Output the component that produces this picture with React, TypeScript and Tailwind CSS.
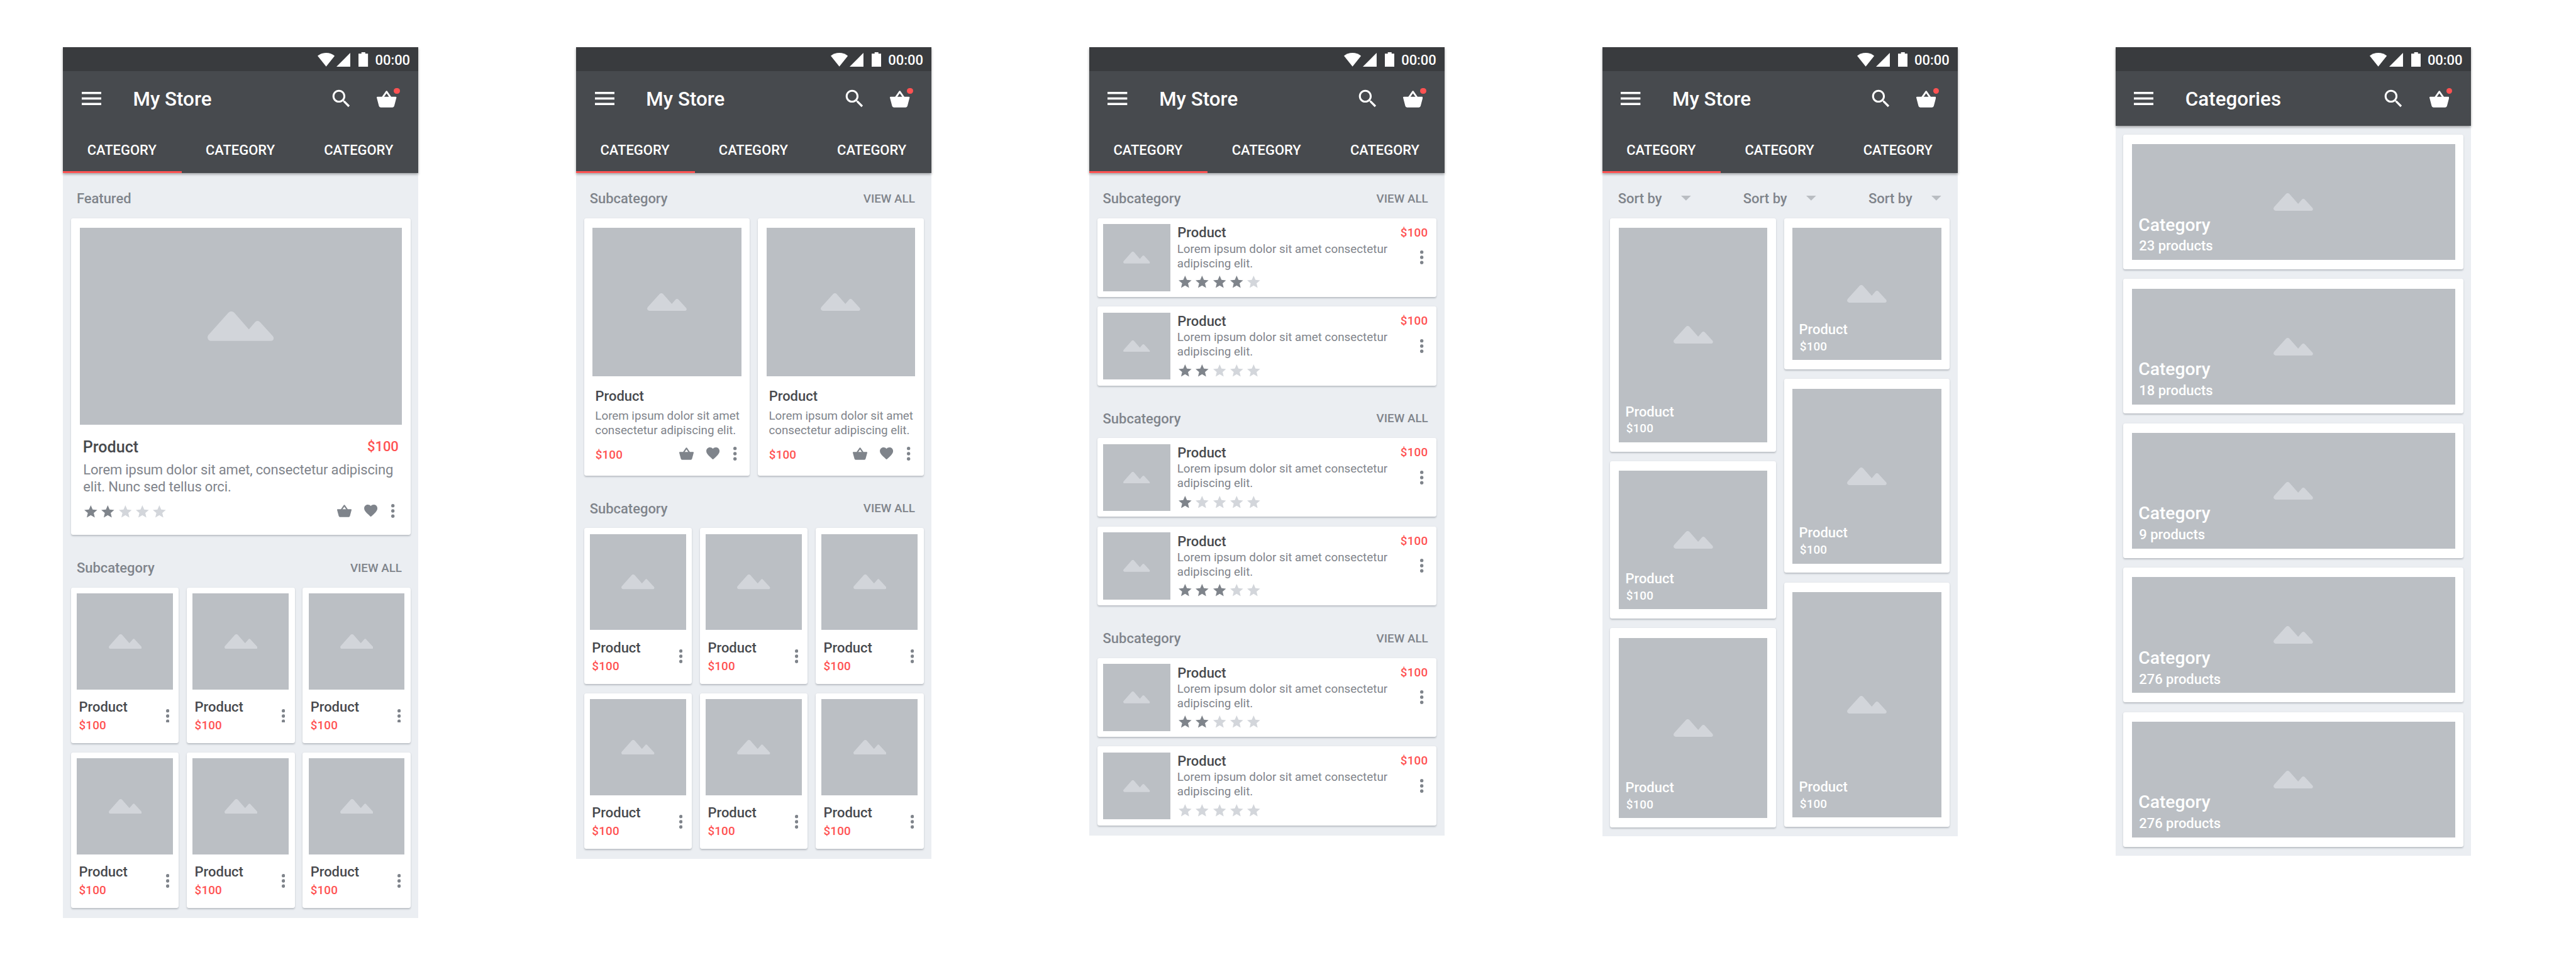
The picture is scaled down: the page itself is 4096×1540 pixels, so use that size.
import React from "react";

/* ---------- icons ---------- */

function WifiIcon() {
  return (
    <svg viewBox="0 0 17.33 13.8" className="h-[13.8px] w-[17.33px] fill-white">
      <path d="M8.67 13.8 0 3.1C2.2 1.2 5.3 0 8.67 0s6.46 1.2 8.66 3.1z" />
    </svg>
  );
}

function SignalIcon() {
  return (
    <svg viewBox="0 0 14 14" className="ml-[2px] size-[14px] fill-white">
      <path d="M0 14 14 0v14z" />
    </svg>
  );
}

function BatteryIcon() {
  return (
    <svg viewBox="0 0 9.67 14.67" className="ml-[8.33px] h-[14.67px] w-[9.67px] fill-white">
      <path d="M3 0h3.85v1.4h2.82v13.27H0V1.4h3z" />
    </svg>
  );
}

function MenuIcon() {
  return (
    <svg viewBox="0 0 20 13.33" className="h-[13.33px] w-[20px] fill-white">
      <path d="M0 0h20v2.2H0zM0 5.56h20v2.2H0zM0 11.13h20v2.2H0z" />
    </svg>
  );
}

function SearchIcon() {
  return (
    <svg viewBox="0 0 24 24" className="size-6 fill-white">
      <path d="M15.5 14h-.79l-.28-.27C15.41 12.59 16 11.11 16 9.5 16 5.91 13.09 3 9.5 3S3 5.91 3 9.5 5.91 16 9.5 16c1.61 0 3.09-.59 4.23-1.57l.27.28v.79l5 4.99L20.49 19l-4.99-5zm-6 0C7.01 14 5 11.99 5 9.5S7.01 5 9.5 5 14 7.01 14 9.5 11.99 14 9.5 14z" />
    </svg>
  );
}

function BasketIcon({ className }: { className: string }) {
  return (
    <svg viewBox="0 0 20 17" className={className}>
      <path
        d="M5.9 7 10 1.1 14.1 7"
        fill="none"
        stroke="currentColor"
        strokeWidth="1.9"
        strokeLinejoin="round"
      />
      <path
        fill="currentColor"
        d="M.8 6.2h18.4a.8.8 0 0 1 .77 1l-2.22 8.4A1.85 1.85 0 0 1 16 17H4a1.85 1.85 0 0 1-1.75-1.4L.03 7.2a.8.8 0 0 1 .77-1z"
      />
    </svg>
  );
}

function HeartIcon() {
  return (
    <svg viewBox="2 3 20 18.35" className="ml-[12.9px] h-[12.3px] w-[13.5px] fill-[#7f848b]">
      <path d="M12 21.35l-1.45-1.32C5.4 15.36 2 12.28 2 8.5 2 5.42 4.42 3 7.5 3c1.74 0 3.41.81 4.5 2.09C13.09 3.81 14.76 3 16.5 3 19.58 3 22 5.42 22 8.5c0 3.78-3.4 6.86-8.55 11.54L12 21.35z" />
    </svg>
  );
}

function MoreIcon({ className = "" }: { className?: string }) {
  return (
    <svg viewBox="0 0 3.4 14" className={`h-[14px] w-[3.4px] shrink-0 fill-[#7f848b] ${className}`}>
      <circle cx="1.7" cy="1.7" r="1.7" />
      <circle cx="1.7" cy="7" r="1.7" />
      <circle cx="1.7" cy="12.3" r="1.7" />
    </svg>
  );
}

function Mountain({ className }: { className: string }) {
  return (
    <svg viewBox="0 0 67 29.8" className={`fill-[#d2d5da] ${className}`}>
      <path d="M21.1 1.3a4 4 0 0 1 6 0l14.8 16.8 6.4-7.4a3.2 3.2 0 0 1 4.8 0l13 14.2c1.9 2.1.7 4.9-1.9 4.9H3.8c-3.4 0-4.9-3.7-2.7-6.2z" />
    </svg>
  );
}

function Stars({ value, className = "" }: { value: number; className?: string }) {
  return (
    <div className={`flex gap-[4.24px] ${className}`}>
      {[0, 1, 2, 3, 4].map((i) => (
        <svg
          key={i}
          viewBox="2 2 20 19"
          className={`h-[12.5px] w-[13.2px] ${i < value ? "fill-[#7f848b]" : "fill-[#d3d6db]"}`}
        >
          <path d="M12 17.27 18.18 21l-1.64-7.03L22 9.24l-7.19-.61L12 2 9.19 8.63 2 9.24l5.46 4.73L5.82 21z" />
        </svg>
      ))}
    </div>
  );
}

/* ---------- shared building blocks ---------- */

function Card({ className = "", children }: { className?: string; children: React.ReactNode }) {
  return (
    <div
      className={`rounded-[2px] bg-white shadow-[0_0.7px_1.5px_rgba(60,66,76,0.27)] ${className}`}
    >
      {children}
    </div>
  );
}

function Placeholder({ className, icon }: { className: string; icon: string }) {
  return (
    <div className={`flex items-center justify-center bg-[#bbbfc4] ${className}`}>
      <Mountain className={icon} />
    </div>
  );
}

function Header({ title, tabs = true }: { title: string; tabs?: boolean }) {
  return (
    <header className="relative bg-[#474a4e] text-white shadow-[0_1px_2.5px_rgba(0,0,0,0.33)]">
      <div className="flex h-[24.67px] items-end justify-end bg-[#393b3e] pr-[8.4px] pb-[5px]">
        <WifiIcon />
        <SignalIcon />
        <BatteryIcon />
        <span className="-mb-[1.7px] ml-[7px] text-sm leading-4 font-medium tracking-[-0.02px]">
          00:00
        </span>
      </div>
      <div className="flex h-[55px] items-center pr-[22px] pl-[18.7px]">
        <MenuIcon />
        <h1 className="mt-[1.6px] ml-[32.1px] flex-1 text-xl leading-6 font-medium">{title}</h1>
        <SearchIcon />
        <div className="relative mt-px ml-6">
          <BasketIcon className="h-[17px] w-[20px]" />
          <span className="absolute -top-[2.8px] -right-[3.3px] size-[6.2px] rounded-full bg-[#ff5252]" />
        </div>
      </div>
      {tabs && (
        <nav className="flex h-[48px] text-sm font-medium">
          {[true, false, false].map((active, i) => (
            <div key={i} className="flex w-[120px] flex-col">
              <span className="flex flex-1 items-center justify-center pt-[3px] pr-[1px]">
                CATEGORY
              </span>
              <span className={`h-[2px] ${active ? "bg-[#ff5252]" : ""}`} />
            </div>
          ))}
        </nav>
      )}
    </header>
  );
}

function Phone({
  title = "My Store",
  tabs = true,
  bodyClass = "pb-[10.2px]",
  children,
}: {
  title?: string;
  tabs?: boolean;
  bodyClass?: string;
  children: React.ReactNode;
}) {
  return (
    <section className="w-[360px] shrink-0 bg-[#ebeef2]">
      <Header title={title} tabs={tabs} />
      <div className={`px-2 ${bodyClass}`}>{children}</div>
    </section>
  );
}

function SectionTitle({
  label,
  first = false,
  viewAll = true,
}: {
  label: string;
  first?: boolean;
  viewAll?: boolean;
}) {
  return (
    <div
      className={`flex items-start justify-between pr-[8.7px] pb-[11.7px] pl-[5.7px] font-medium text-[#7f848b] ${
        first ? "pt-[18px]" : "pt-[25.7px]"
      }`}
    >
      <h2 className="text-sm leading-4">{label}</h2>
      {viewAll && <a className="mt-[1px] text-xs leading-[15px]">VIEW ALL</a>}
    </div>
  );
}

/* ---------- product cards ---------- */

function Actions() {
  return (
    <div className="flex items-center">
      <BasketIcon className="h-[12.6px] w-[14.67px] text-[#7f848b]" />
      <HeartIcon />
      <MoreIcon className="ml-[14.2px]" />
    </div>
  );
}

function FeaturedCard() {
  return (
    <Card className="h-[320.6px] pt-[9.6px]">
      <Placeholder className="mx-[8.67px] h-[199.8px]" icon="h-[29.8px] w-[67px]" />
      <div className="mt-[10.7px] flex items-start justify-between px-3">
        <h3 className="text-base leading-6 font-medium text-[#47494d]">Product</h3>
        <span className="-mt-[0.6px] text-sm leading-6 font-medium text-[#ff5252]">$100</span>
      </div>
      <p className="mt-[2.8px] pl-[12.3px] text-sm leading-[17.1px] tracking-[-0.09px] text-[#7f848b]">
        Lorem ipsum dolor sit amet, consectetur adipiscing
        <br />
        elit. Nunc sed tellus orci.
      </p>
      <div className="mt-[8.4px] flex items-center justify-between pr-4 pl-[13.4px]">
        <Stars value={2} className="mt-[1.5px]" />
        <Actions />
      </div>
    </Card>
  );
}

function WideCard() {
  return (
    <Card className="h-[260.6px] flex-1 pt-[9.6px]">
      <Placeholder className="mx-[8.67px] h-[150.4px]" icon="h-[17.8px] w-[40px]" />
      <h3 className="mt-[10.6px] pl-[11.3px] text-sm leading-5 font-medium text-[#47494d]">
        Product
      </h3>
      <p className="mt-[2.75px] pl-[11.2px] text-xs leading-[14.7px] tracking-[-0.02px] whitespace-nowrap text-[#7f848b]">
        Lorem ipsum dolor sit amet
        <br />
        consectetur adipiscing elit.
      </p>
      <div className="mt-[8.7px] flex h-[14px] items-center justify-between pr-[13.3px] pl-[11.4px]">
        <span className="mt-[3.5px] text-xs leading-[14px] font-medium tracking-[0.1px] text-[#ff5252]">
          $100
        </span>
        <Actions />
      </div>
    </Card>
  );
}

function MiniCard() {
  return (
    <Card className="h-[157.6px] p-1.5">
      <Placeholder className="h-[97.33px]" icon="h-[14.9px] w-[33.4px]" />
      <div className="mt-2 flex justify-between pr-[3.7px] pl-[2px]">
        <div className="font-medium">
          <h3 className="text-sm leading-5 text-[#47494d]">Product</h3>
          <p className="mt-[0.8px] text-xs leading-4 tracking-[0.1px] text-[#ff5252]">$100</p>
        </div>
        <MoreIcon className="mt-[11.7px]" />
      </div>
    </Card>
  );
}

function MiniGrid() {
  return (
    <div className="grid grid-cols-3 gap-x-2 gap-y-[9.6px]">
      {[0, 1, 2, 3, 4, 5].map((i) => (
        <MiniCard key={i} />
      ))}
    </div>
  );
}

function ListCard({ rating }: { rating: number }) {
  return (
    <Card className="flex h-[79.8px]">
      <Placeholder className="m-1.5 size-[68px]" icon="h-[12px] w-[27px]" />
      <div className="flex-1 pt-[6.2px] pl-[1px]">
        <h3 className="ml-[0.4px] text-sm leading-[18px] font-medium text-[#47494d]">Product</h3>
        <p className="text-xs leading-[14.7px] whitespace-nowrap text-[#7f848b]">
          Lorem ipsum dolor sit amet consectetur
          <br />
          adipiscing elit.
        </p>
        <Stars value={rating} className="mt-[4.8px] ml-[1.5px]" />
      </div>
      <div className="flex flex-col items-end pt-[7px] pr-[9px]">
        <span className="text-xs leading-4 font-medium tracking-[0.1px] text-[#ff5252]">$100</span>
        <MoreIcon className="mt-[9.9px] mr-[4.3px]" />
      </div>
    </Card>
  );
}

function CoverCard({ className, children }: { className: string; children: React.ReactNode }) {
  return (
    <Card className={`px-[8.67px] pt-[9.7px] pb-[9.4px] ${className}`}>
      <div className="grid h-full bg-[#bbbfc4] font-medium text-white">
        <Mountain className="col-start-1 row-start-1 h-[17.8px] w-[40px] place-self-center" />
        <div className="col-start-1 row-start-1 self-end pl-[6.6px]">{children}</div>
      </div>
    </Card>
  );
}

function TileCard({ className }: { className: string }) {
  return (
    <CoverCard className={className}>
      <h3 className="text-sm leading-4">Product</h3>
      <p className="mt-[1.7px] mb-[5.3px] ml-[0.8px] text-xs leading-4 tracking-[0.1px]">$100</p>
    </CoverCard>
  );
}

function CategoryCard({ count }: { count: number }) {
  return (
    <CoverCard className="h-[136.4px] w-[344.67px]">
      <h3 className="text-lg leading-5">Category</h3>
      <p className="mt-[3.5px] mb-[6.2px] ml-[0.6px] text-sm leading-4">{count} products</p>
    </CoverCard>
  );
}

function SortBar() {
  return (
    <div className="flex justify-between pt-[17.7px] pr-[8.6px] pb-3 pl-[7.8px]">
      {[0, 1, 2].map((i) => (
        <div key={i} className="flex w-[73.8px] items-center justify-between">
          <span className="text-sm leading-4 font-medium text-[#7f848b]">Sort by</span>
          <svg viewBox="0 0 10 5" className="h-[5px] w-[10px] fill-[#b9bdc2]">
            <path d="M0 0h10L5 5z" />
          </svg>
        </div>
      ))}
    </div>
  );
}

const LIST_RATINGS = [
  [4, 2],
  [1, 3],
  [2, 0],
];

export default function App() {
  return (
    <main className="h-[1540px] w-[4096px] overflow-hidden bg-white font-[Roboto,sans-serif]">
      {/* Screens are laid out in 360dp units and scaled up together. */}
      <div className="flex items-start gap-[160px] pt-[47.67px] pl-16 [zoom:1.56895]">
        <Phone>
          <SectionTitle label="Featured" first viewAll={false} />
          <FeaturedCard />
          <SectionTitle label="Subcategory" />
          <MiniGrid />
        </Phone>

        <Phone>
          <SectionTitle label="Subcategory" first />
          <div className="flex gap-2">
            <WideCard />
            <WideCard />
          </div>
          <SectionTitle label="Subcategory" />
          <MiniGrid />
        </Phone>

        <Phone>
          {LIST_RATINGS.map((ratings, i) => (
            <React.Fragment key={i}>
              <SectionTitle label="Subcategory" first={i === 0} />
              <div className="flex flex-col gap-[9.8px]">
                {ratings.map((rating, j) => (
                  <ListCard key={j} rating={rating} />
                ))}
              </div>
            </React.Fragment>
          ))}
        </Phone>

        <Phone bodyClass="pb-[8.9px]">
          <SortBar />
          <div className="grid grid-cols-2 items-start gap-2">
            <div className="flex flex-col gap-[9.8px]">
              <TileCard className="h-[236.4px]" />
              <TileCard className="h-[159.4px]" />
              <TileCard className="h-[201.7px]" />
            </div>
            <div className="flex flex-col gap-[9.8px]">
              <TileCard className="h-[153.2px]" />
              <TileCard className="h-[196.2px]" />
              <TileCard className="h-[247.4px]" />
            </div>
          </div>
        </Phone>

        <Phone title="Categories" tabs={false} bodyClass="pt-[9.1px] pb-[9.1px]">
          <div className="flex flex-col gap-[9.8px]">
            {[23, 18, 9, 276, 276].map((count, i) => (
              <CategoryCard key={i} count={count} />
            ))}
          </div>
        </Phone>
      </div>
    </main>
  );
}
